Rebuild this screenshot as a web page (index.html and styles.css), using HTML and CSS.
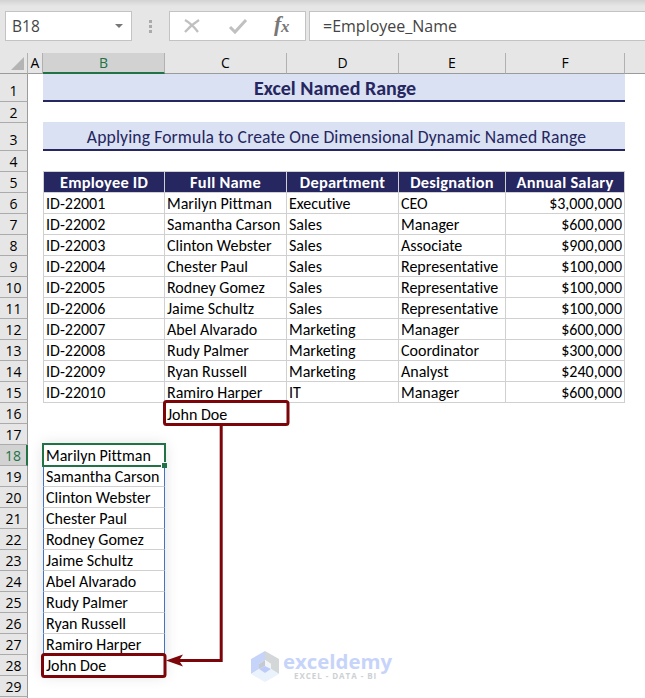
FILE: index.html
```
<!DOCTYPE html>
<html lang="en">
<head>
  <meta charset="UTF-8" />
  <title>Excel Named Range</title>
  <link rel="stylesheet" href="styles.css">
</head>
<body>

<div class="formula-bar">
  <div class="name-box"><span>B18</span><i class="caret"></i></div>
  <div class="dots"><i></i><i></i><i></i></div>
  <div class="buttons">
    <svg width="136" height="28" viewBox="0 0 136 28">
      <path d="M15 8 Q22 12 28 20 M29 8 Q21 13 15 20" fill="none" stroke="#c0c0c0" stroke-width="2.3" />
      <path d="M60 15 L65 20 L76 8" fill="none" stroke="#c0c0c0" stroke-width="3" />
      <text class="fx" x="104" y="19">f</text>
      <text class="fx fx-small" x="111" y="20">x</text>
    </svg>
  </div>
  <div class="formula">=Employee_Name</div>
</div>

<div class="sheet">
  <table>
    <colgroup>
      <col class="w-head"><col class="w-a"><col class="w-b"><col class="w-c"><col class="w-d"><col class="w-e"><col class="w-f"><col>
    </colgroup>
    <thead>
      <tr><th class="corner"><i></i></th><th>A</th><th class="active">B</th><th>C</th><th>D</th><th>E</th><th>F</th><th></th></tr>
    </thead>
    <tbody>
      <tr class="tall"><th>1</th><td></td><td class="banner title" colspan="5">Excel Named Range</td><td></td></tr>
      <tr><th>2</th></tr>
      <tr class="tall"><th>3</th><td></td><td class="banner subtitle" colspan="5">Applying Formula to Create One Dimensional Dynamic Named Range</td><td></td></tr>
      <tr><th>4</th><td></td><td class="above"></td><td class="above"></td><td class="above"></td><td class="above"></td><td class="above"></td></tr>
      <tr class="head"><th>5</th><td></td><td>Employee ID</td><td>Full Name</td><td>Department</td><td>Designation</td><td>Annual Salary</td></tr>
      <tr class="data"><th>6</th><td></td><td>ID-22001</td><td>Marilyn Pittman</td><td>Executive</td><td>CEO</td><td>$3,000,000</td></tr>
      <tr class="data"><th>7</th><td></td><td>ID-22002</td><td>Samantha Carson</td><td>Sales</td><td>Manager</td><td>$600,000</td></tr>
      <tr class="data"><th>8</th><td></td><td>ID-22003</td><td>Clinton Webster</td><td>Sales</td><td>Associate</td><td>$900,000</td></tr>
      <tr class="data"><th>9</th><td></td><td>ID-22004</td><td>Chester Paul</td><td>Sales</td><td>Representative</td><td>$100,000</td></tr>
      <tr class="data"><th>10</th><td></td><td>ID-22005</td><td>Rodney Gomez</td><td>Sales</td><td>Representative</td><td>$100,000</td></tr>
      <tr class="data"><th>11</th><td></td><td>ID-22006</td><td>Jaime Schultz</td><td>Sales</td><td>Representative</td><td>$100,000</td></tr>
      <tr class="data"><th>12</th><td></td><td>ID-22007</td><td>Abel Alvarado</td><td>Marketing</td><td>Manager</td><td>$600,000</td></tr>
      <tr class="data"><th>13</th><td></td><td>ID-22008</td><td>Rudy Palmer</td><td>Marketing</td><td>Coordinator</td><td>$300,000</td></tr>
      <tr class="data"><th>14</th><td></td><td>ID-22009</td><td>Ryan Russell</td><td>Marketing</td><td>Analyst</td><td>$240,000</td></tr>
      <tr class="data"><th>15</th><td></td><td>ID-22010</td><td>Ramiro Harper</td><td>IT</td><td>Manager</td><td>$600,000</td></tr>
      <tr><th>16</th><td></td><td></td><td>John Doe</td></tr>
      <tr><th>17</th></tr>
      <tr class="spill"><th class="active">18</th><td></td><td>Marilyn Pittman</td></tr>
      <tr class="spill"><th>19</th><td></td><td>Samantha Carson</td></tr>
      <tr class="spill"><th>20</th><td></td><td>Clinton Webster</td></tr>
      <tr class="spill"><th>21</th><td></td><td>Chester Paul</td></tr>
      <tr class="spill"><th>22</th><td></td><td>Rodney Gomez</td></tr>
      <tr class="spill"><th>23</th><td></td><td>Jaime Schultz</td></tr>
      <tr class="spill"><th>24</th><td></td><td>Abel Alvarado</td></tr>
      <tr class="spill"><th>25</th><td></td><td>Rudy Palmer</td></tr>
      <tr class="spill"><th>26</th><td></td><td>Ryan Russell</td></tr>
      <tr class="spill"><th>27</th><td></td><td>Ramiro Harper</td></tr>
      <tr class="spill"><th>28</th><td></td><td>John Doe</td></tr>
      <tr><th>29</th></tr>
      <tr><th></th></tr>
    </tbody>
  </table>

  <div class="spill-shadow"></div>

  <!-- selection, red boxes and arrow -->
  <svg class="marks" width="645" height="645" viewBox="0 53 645 645">
    <rect x="43" y="444" width="122" height="22" fill="none" stroke="#217346" stroke-width="2" />
    <rect x="161" y="462" width="6" height="6" fill="#fff" />
    <rect x="162" y="463" width="5" height="5" fill="#217346" />
    <g fill="none" stroke="#7b0509" stroke-width="3">
      <rect x="164.5" y="401.5" width="123.5" height="23" rx="2" />
      <rect x="42.5" y="654.5" width="122.5" height="22" rx="2" />
      <path d="M221.2 426 V660.5 H178" />
    </g>
    <path d="M166 660.5 L183 654.5 L179 660.5 L183 666.5 Z" fill="#7b0509" />
  </svg>

  <div class="watermark">
    <svg width="28" height="32" viewBox="0 0 28 32">
      <path d="M14 0 L0 8 V23 L8 18 V13 L14 9 Z" fill="#c7d4fa" />
      <path d="M14 0 L28 8 V23 L20 18 V13 L14 9 Z" fill="#d3d7d8" />
      <path d="M0 23 L8 18 L14 22 L20 18 L28 23 L14 31 Z" fill="#eaf2fb" />
      <path d="M8 13 L14 9 V15 L8 18 Z" fill="#c5cad0" />
      <path d="M14 9 L20 13 V18 L14 15 Z" fill="#f1f4f8" />
      <path d="M8 18 L14 15 L20 18 L14 22 Z" fill="#bccbf8" />
    </svg>
    <div>
      <div class="brand">exceldemy</div>
      <div class="tagline">EXCEL - DATA - BI</div>
    </div>
  </div>
</div>

</body>
</html>
```
FILE: styles.css
```
body {
  margin: 0;
  height: 698px;
  overflow: hidden;
  background: #fff;
  color: #000;
  font-family: Calibri, Carlito, Lato, sans-serif;
  font-size: 16px;
  font-variant-ligatures: none;
}

.formula-bar {
  display: flex;
  box-sizing: border-box;
  height: 53px;
  padding: 11px 0 12px 5px;
  background: linear-gradient(#d2d2d2, #e6e6e6 6px);
  font-family: "Segoe UI", "Open Sans", sans-serif;
  font-size: 16px;
  line-height: 29px;
  color: #444;
}

.name-box, .buttons, .formula {
  box-sizing: border-box;
  height: 30px;
  border: 1px solid #c3c3c3;
  background: #fff;
}

.name-box {
  display: flex;
  justify-content: space-between;
  align-items: center;
  width: 127px;
  padding: 0 8px 0 6px;
  font-size: 15.5px;
}

.caret {
  border: 4px solid transparent;
  border-top-color: #777;
  border-bottom: 0;
}

.dots {
  display: flex;
  flex-direction: column;
  justify-content: center;
  align-items: center;
  gap: 2px;
  width: 37px;
}

.dots i {
  width: 3px;
  height: 3px;
  background: #aaa;
}

.buttons {
  width: 137px;
}

.buttons svg {
  display: block;
}

.fx {
  font: italic bold 22px "Liberation Serif", serif;
  fill: #777;
}

.fx-small {
  font-size: 17px;
}

.formula {
  flex: 1;
  margin-left: 3px;
  padding-left: 13px;
  border-right: 0;
}

.sheet {
  position: relative;
}

table {
  width: 645px;
  table-layout: fixed;
  border-spacing: 0;
}

.w-head { width: 28px; }
.w-a { width: 15px; }
.w-b { width: 122px; }
.w-c { width: 122px; }
.w-d { width: 112px; }
.w-e { width: 107px; }
.w-f { width: 119px; }

tr { height: 21px; }
tr.tall { height: 28px; }

th, td {
  box-sizing: border-box;
  padding: 0;
  line-height: 19px;
  white-space: nowrap;
  overflow: hidden;
}

td {
  padding-top: 1px;
}

th {
  background: #e6e6e6;
  border-right: 1px solid #9b9b9b;
  border-bottom: 1px solid #ababab;
  font-family: "Segoe UI", "Open Sans", sans-serif;
  font-size: 14px;
  font-weight: normal;
}

thead th {
  padding-bottom: 1px;
  line-height: 18px;
  border-right-color: #b1b1b1;
  border-bottom-color: #9b9b9b;
}

thead th:last-child {
  border-right: 0;
}

.tall th {
  padding-top: 6px;
}

thead .corner {
  padding: 0 3px 3px 0;
  vertical-align: bottom;
}

.corner i {
  display: block;
  margin-left: auto;
  width: 0;
  border-left: 13px solid transparent;
  border-bottom: 13px solid #b4b4b4;
}

thead .active {
  padding-bottom: 0;
  background: #d2d2d2;
  border-bottom: 2px solid #217346;
  color: #217346;
}

tbody .active {
  background: #d2d2d2;
  border-right: 2px solid #217346;
  color: #217346;
}

.banner {
  background: #d9e1f2;
  border-bottom: 2px solid #262660;
  color: #262660;
  text-align: center;
}

.title {
  padding-top: 3px;
  padding-left: 2px;
  font-size: 20px;
  font-weight: bold;
}

.subtitle {
  padding-top: 3px;
  padding-left: 5px;
  box-shadow: 0 -1px #d9e1f2;
  font-size: 17.6px;
  letter-spacing: 0.13px;
}

.above {
  border-bottom: 1px solid #d0d0d0;
}

.head td:nth-child(n+3), .data td:nth-child(n+3) {
  border-right: 1px solid #d0d0d0;
  border-bottom: 1px solid #d0d0d0;
  padding-left: 2px;
}

.head td:nth-child(3), .data td:nth-child(3) {
  border-left: 1px solid #d0d0d0;
}

.head td:nth-child(n+3) {
  padding-left: 0;
  background: #262660;
  color: #fff;
  font-size: 16.4px;
  font-weight: bold;
  letter-spacing: 0.25px;
  text-align: center;
}

.data td:last-child {
  padding-right: 2px;
  text-align: right;
}

td:nth-child(4) {
  padding-left: 2px;
}

.spill td:nth-child(3) {
  padding-left: 2px;
  border: 1px solid #4472c4;
  border-top: 0;
  border-bottom-color: #d0d0d0;
}

.spill-shadow {
  position: absolute;
  left: 43px;
  top: 391px;
  width: 122px;
  height: 232px;
  box-shadow: 0 0 14px rgba(0, 0, 0, 0.12);
  clip-path: inset(-16px -16px -16px -14px);
}

.marks {
  position: absolute;
  left: 0;
  top: 0;
}

.watermark {
  position: absolute;
  left: 251px;
  top: 598px;
  display: flex;
  gap: 4px;
}

.brand {
  font: bold 20.4px/21px "Open Sans", sans-serif;
  color: #c7d4fa;
}

.tagline {
  padding-left: 11px;
  font: bold 8px/8px "Open Sans", sans-serif;
  letter-spacing: 0.95px;
  color: #cdd1d4;
}
```
